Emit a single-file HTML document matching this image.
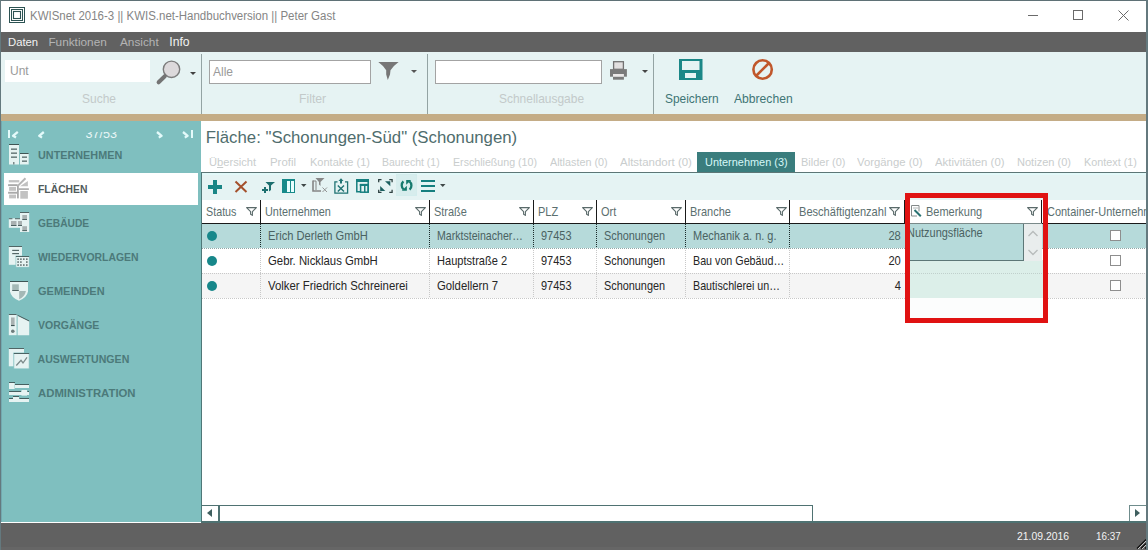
<!DOCTYPE html>
<html><head><meta charset="utf-8">
<style>
*{box-sizing:border-box;margin:0;padding:0}
html,body{width:1148px;height:550px;overflow:hidden;background:#fff;font-family:"Liberation Sans",sans-serif}
.a{position:absolute}
.t{position:absolute;white-space:nowrap;line-height:normal}
#win{position:absolute;left:0;top:0;width:1148px;height:550px;overflow:hidden;background:#fff}
</style></head><body>
<div id="win">
<!-- borders -->

<!-- title bar -->
<svg class="a" style="left:9px;top:7px" width="16" height="16" viewBox="0 0 16 16">
<rect x="0.5" y="0.5" width="15" height="15" fill="none" stroke="#2c5252" stroke-width="1"/>
<rect x="2.5" y="2.5" width="11" height="11" fill="none" stroke="#2c5252" stroke-width="1"/>
<rect x="4.5" y="4.5" width="7" height="7" fill="none" stroke="#2c5252" stroke-width="1.1"/>
</svg>
<div class="t" style="left:30.2px;top:8.69px;font-size:12.5px;color:#858585;transform:scaleX(0.918);transform-origin:0 0">KWISnet 2016-3 || KWIS.net-Handbuchversion || Peter Gast</div>
<div class="a" style="left:1028px;top:15px;width:10px;height:1px;background:#6a6a6a"></div>
<div class="a" style="left:1073px;top:10px;width:10px;height:10px;border:1px solid #6a6a6a"></div>
<svg class="a" style="left:1118px;top:10px" width="11" height="11" viewBox="0 0 11 11"><path d="M0.5 0.5L10.5 10.5M10.5 0.5L0.5 10.5" stroke="#6a6a6a" stroke-width="1"/></svg>

<!-- menu bar -->
<div class="a" style="left:1px;top:32px;width:1145px;height:20px;background:#616161"></div>
<div class="t" style="left:8px;top:36.2px;font-size:11.3px;color:#f2f2f2">Daten</div>
<div class="t" style="left:48.4px;top:35.4px;font-size:11.8px;color:#b4b4b4">Funktionen</div>
<div class="t" style="left:120px;top:35.4px;font-size:11.8px;color:#b4b4b4">Ansicht</div>
<div class="t" style="left:169.3px;top:35.2px;font-size:12.2px;color:#f2f2f2">Info</div>

<!-- ribbon -->
<div class="a" style="left:1px;top:52px;width:1145px;height:62px;background:#e6f3f3"></div>
<div class="a" style="left:201px;top:54px;width:1px;height:60px;background:#93a3a3"></div>
<div class="a" style="left:427px;top:54px;width:1px;height:60px;background:#93a3a3"></div>
<div class="a" style="left:653px;top:54px;width:1px;height:60px;background:#93a3a3"></div>
<!-- Suche -->
<div class="a" style="left:5px;top:60px;width:145px;height:22px;background:#fff"></div>
<div class="t" style="left:10px;top:63.5px;font-size:12px;color:#9a9a9a">Unt</div>
<svg class="a" style="left:155px;top:58px" width="30" height="28" viewBox="0 0 30 28">
<circle cx="16.5" cy="11.3" r="8.2" fill="#dcd9db" stroke="#7c7c7c" stroke-width="1.4"/>
<path d="M9.8 18.2L3.6 24.3" stroke="#747474" stroke-width="4" stroke-linecap="round"/>
</svg>
<div class="a" style="left:189.5px;top:72px;width:0;height:0;border-left:3px solid transparent;border-right:3px solid transparent;border-top:3px solid #404040"></div>
<div class="t" style="left:81.6px;top:91.42px;font-size:12.8px;color:#c3caca;transform:scaleX(0.937);transform-origin:0 0">Suche</div>
<!-- Filter -->
<div class="a" style="left:209px;top:60px;width:162px;height:24px;background:#fff;border:1px solid #a3a3a3"></div>
<div class="t" style="left:213px;top:64.5px;font-size:12px;color:#9a9a9a">Alle</div>
<svg class="a" style="left:377px;top:61px" width="23" height="20" viewBox="0 0 23 20"><path d="M1.3 0.9H21.6Q16 5 13.5 9.2L13 13.5L10.8 18.9L9.2 13.5V9.2Q7 5 1.3 0.9Z" fill="#767676"/></svg>
<div class="a" style="left:411px;top:70px;width:0;height:0;border-left:3px solid transparent;border-right:3px solid transparent;border-top:3px solid #555"></div>
<div class="t" style="left:299.3px;top:91.42px;font-size:12.8px;color:#c3caca;transform:scaleX(0.954);transform-origin:0 0">Filter</div>
<!-- Schnellausgabe -->
<div class="a" style="left:435px;top:60px;width:167px;height:24px;background:#fff;border:1px solid #a3a3a3"></div>
<svg class="a" style="left:609px;top:61px" width="19" height="20" viewBox="0 0 19 20">
<rect x="4.6" y="0.7" width="9.8" height="7.6" fill="#e2e0e0" stroke="#727272" stroke-width="1.3"/>
<rect x="1" y="8.1" width="16.9" height="7.6" fill="#7a7a7a"/>
<rect x="4" y="13" width="10.9" height="2.7" fill="#ebe8e8"/>
<rect x="4" y="16" width="10.9" height="2.7" fill="#7a7a7a"/>
</svg>
<div class="a" style="left:641.5px;top:70px;width:0;height:0;border-left:3px solid transparent;border-right:3px solid transparent;border-top:3px solid #454545"></div>
<div class="t" style="left:499px;top:91.42px;font-size:12.8px;color:#c3caca;transform:scaleX(0.934);transform-origin:0 0">Schnellausgabe</div>
<!-- Speichern -->
<svg class="a" style="left:679px;top:59px" width="24" height="21" viewBox="0 0 24 21">
<rect x="0" y="0" width="23.5" height="21" fill="#1b8787"/>
<rect x="3" y="2" width="17.5" height="9" fill="#e6f3f3"/>
<rect x="6" y="14" width="11" height="5" fill="#e6f3f3"/>
</svg>
<div class="t" style="left:664.8px;top:91.42px;font-size:12.8px;color:#3e7575;transform:scaleX(0.932);transform-origin:0 0">Speichern</div>
<svg class="a" style="left:751px;top:58px" width="24" height="24" viewBox="0 0 24 24">
<circle cx="11.6" cy="11.5" r="9.2" fill="none" stroke="#c0572b" stroke-width="2.6"/>
<path d="M17.5 5.5L5.5 17.5" stroke="#c0572b" stroke-width="2.6"/>
</svg>
<div class="t" style="left:733.8px;top:91.42px;font-size:12.8px;color:#3e7575;transform:scaleX(0.947);transform-origin:0 0">Abbrechen</div>

<!-- tan stripe -->
<div class="a" style="left:1px;top:114px;width:1145px;height:7px;background:#c4ac86"></div>

<!-- sidebar -->
<div class="a" style="left:1px;top:121px;width:200px;height:401px;background:#7fbfbf"></div>
<div class="a" style="left:1px;top:131.5px;width:200px;height:7px;overflow:hidden">
<div class="t" style="left:84.4px;top:-4.8px;font-size:12.6px;color:#e8f6f6">37/53</div>
</div>
<div class="a" style="left:4px;top:173px;width:194px;height:32px;background:#fff"></div>
<div class="t" style="left:37.5px;top:149.4px;font-size:10.6px;font-weight:bold;color:#4c7a7a;transform:scaleX(1.022);transform-origin:0 0">UNTERNEHMEN</div>
<div class="t" style="left:37.5px;top:183.4px;font-size:10.6px;font-weight:bold;color:#505a5a;transform:scaleX(0.978);transform-origin:0 0">FLÄCHEN</div>
<div class="t" style="left:37.5px;top:217.4px;font-size:10.6px;font-weight:bold;color:#4c7a7a;transform:scaleX(0.965);transform-origin:0 0">GEBÄUDE</div>
<div class="t" style="left:37.5px;top:251.4px;font-size:10.6px;font-weight:bold;color:#4c7a7a;transform:scaleX(0.984);transform-origin:0 0">WIEDERVORLAGEN</div>
<div class="t" style="left:37.5px;top:285.4px;font-size:10.6px;font-weight:bold;color:#4c7a7a;transform:scaleX(1.038);transform-origin:0 0">GEMEINDEN</div>
<div class="t" style="left:37.5px;top:319.4px;font-size:10.6px;font-weight:bold;color:#4c7a7a;transform:scaleX(0.992);transform-origin:0 0">VORGÄNGE</div>
<div class="t" style="left:37.5px;top:353.4px;font-size:10.6px;font-weight:bold;color:#4c7a7a;transform:scaleX(1.0);transform-origin:0 0">AUSWERTUNGEN</div>
<div class="t" style="left:37.5px;top:387.4px;font-size:10.6px;font-weight:bold;color:#4c7a7a;transform:scaleX(1.072);transform-origin:0 0">ADMINISTRATION</div>

<!--S:side-->
<svg class="a" style="left:0;top:0" width="210" height="420" viewBox="0 0 210 420">
<!-- nav arrows -->
<rect x="8" y="130" width="2" height="8" fill="#e4fafa"/>
<path d="M17.8 131.8L13 135.8L16 137.6" fill="none" stroke="#e4fafa" stroke-width="2.3" stroke-linejoin="round"/>
<path d="M43.8 132L39.2 135.8L42 137.6" fill="none" stroke="#e4fafa" stroke-width="2.3" stroke-linejoin="round"/>
<path d="M157 132L161.6 135.8L158.8 137.6" fill="none" stroke="#e4fafa" stroke-width="2.3" stroke-linejoin="round"/>
<path d="M183 132L187.6 135.8L184.8 137.6" fill="none" stroke="#e4fafa" stroke-width="2.3" stroke-linejoin="round"/>
<rect x="191" y="130" width="2" height="8" fill="#e4fafa"/>
<!-- UNTERNEHMEN -->
<g>
<rect x="9" y="144" width="10" height="20.5" fill="#e6f3f2"/>
<rect x="9" y="144" width="10" height="1" fill="#3f5555"/>
<rect x="11" y="148.5" width="6" height="1.3" fill="#556868"/>
<rect x="11" y="152.5" width="6" height="1.3" fill="#556868"/>
<rect x="11" y="156.5" width="6" height="1.3" fill="#556868"/>
<rect x="13" y="162" width="1.5" height="2.5" fill="#7a8a8a"/>
<rect x="20" y="153" width="8.7" height="11.5" fill="#e6f3f2"/>
<rect x="20" y="153" width="8.7" height="1" fill="#3f5555"/>
<rect x="22" y="156.5" width="5" height="1.3" fill="#556868"/>
<rect x="22" y="160.5" width="5" height="1.3" fill="#556868"/>
</g>
<!-- FLÄCHEN -->
<g>
<rect x="8.8" y="180.1" width="10.5" height="2.3" fill="#c2c2c2"/>
<rect x="8.1" y="184.2" width="9.6" height="1.9" fill="#a9a9a9"/>
<rect x="9.1" y="187" width="6.9" height="3.8" fill="#c2c2c2"/>
<rect x="8.1" y="191.8" width="9.6" height="1.9" fill="#a9a9a9"/>
<rect x="9.1" y="194.6" width="6.9" height="3.8" fill="#c2c2c2"/>
<rect x="17" y="185" width="1.8" height="13.4" fill="#a9a9a9"/>
<path d="M16.8 185.4L24.8 177.6L26.2 179L18.2 186.8Z" fill="#b5b5b5"/>
<path d="M20 186.2L27.9 180.9V186.2Z" fill="#c2c2c2"/>
<rect x="18.8" y="188.3" width="10.1" height="1.6" fill="#a9a9a9"/>
<rect x="20.3" y="191" width="7.6" height="7.7" fill="#c2c2c2"/>
</g>
<!-- GEBÄUDE -->
<g>
<rect x="20" y="212" width="9.2" height="20" fill="#e6f3f2"/>
<rect x="8.8" y="218.3" width="12" height="9.5" fill="#e6f3f2"/>
<rect x="20" y="212" width="9.2" height="0.9" fill="#3f5555"/>
<rect x="8.8" y="218.3" width="3.6" height="0.9" fill="#3f5555"/>
<rect x="15" y="218.3" width="5" height="0.9" fill="#3f5555"/>
<rect x="22.3" y="215" width="4.7" height="4.5" fill="#a9b2b2"/>
<rect x="22.3" y="219" width="4.7" height="0.9" fill="#3f5555"/>
<rect x="22.3" y="226.2" width="4.7" height="4.5" fill="#a9b2b2"/>
<rect x="22.3" y="230.2" width="4.7" height="0.9" fill="#3f5555"/>
<rect x="11" y="221" width="5.5" height="4.5" fill="#a9b2b2"/>
<rect x="18" y="221" width="4" height="4.5" fill="#a9b2b2"/>
<rect x="11" y="225" width="5.5" height="0.9" fill="#3f5555"/>
<rect x="18" y="225" width="4" height="0.9" fill="#3f5555"/>
</g>
<!-- WIEDERVORLAGEN -->
<g>
<rect x="8.8" y="246" width="13.2" height="18.8" fill="#e6f3f2"/>
<rect x="8.8" y="246" width="13.2" height="0.9" fill="#3f5555"/>
<rect x="12.2" y="249.8" width="6.8" height="1.2" fill="#556868"/>
<rect x="12.2" y="253" width="6.8" height="1.2" fill="#556868"/>
<rect x="15.9" y="256" width="13.3" height="11.2" fill="#e6f3f2" stroke="#7fbfbf" stroke-width="0.6"/>
<rect x="15.9" y="256" width="13.3" height="0.9" fill="#3f5555"/>
<g fill="#5a6a6a">
<rect x="17.3" y="258.4" width="1.6" height="1.5"/><rect x="20.1" y="258.4" width="1.6" height="1.5"/><rect x="23" y="258.4" width="1.6" height="1.5"/><rect x="26" y="258.4" width="1.6" height="1.5"/>
<rect x="17.3" y="261.3" width="1.6" height="1.5"/><rect x="20.1" y="261.3" width="1.6" height="1.5"/><rect x="26" y="261.3" width="1.6" height="1.5"/>
<rect x="17.3" y="264.3" width="1.6" height="1.5"/><rect x="20.1" y="264.3" width="1.6" height="1.5"/><rect x="23" y="264.3" width="1.6" height="1.5"/><rect x="26" y="264.3" width="1.6" height="1.5"/>
</g>
</g>
<!-- GEMEINDEN -->
<g>
<path d="M10 281H28V291.5Q27 297.5 19 300.8Q11 297.5 10 291.5Z" fill="#e6f3f2"/>
<rect x="10" y="281" width="18" height="1" fill="#3f5555"/>
<rect x="12.2" y="284.3" width="6.6" height="6" fill="#a4b8b6"/>
<rect x="12.2" y="290" width="6.6" height="0.9" fill="#3f5555"/>
<path d="M19.2 291H25.9Q25 296.5 19.2 299.3Z" fill="#a4b8b6"/>
</g>
<!-- VORGÄNGE -->
<g>
<rect x="8.8" y="314" width="7.8" height="21.2" fill="#e6f3f2"/>
<rect x="8.8" y="314" width="7.8" height="0.9" fill="#3f5555"/>
<rect x="11" y="317.5" width="3.6" height="8" fill="#a9b2b2"/>
<rect x="11" y="325" width="3.6" height="1.1" fill="#3f5555"/>
<circle cx="12.8" cy="331.3" r="1.8" fill="#6f7d7d"/>
<path d="M17.6 315.3L29.2 321V335.2H17.6Z" fill="#e6f3f2"/>
<path d="M17.6 315.3L29.2 321" stroke="#3f5555" stroke-width="1"/>
</g>
<!-- AUSWERTUNGEN -->
<g>
<rect x="8.8" y="348" width="15.2" height="18.3" fill="#e6f3f2"/>
<rect x="8.8" y="348" width="15.2" height="0.9" fill="#3f5555"/>
<rect x="13.8" y="353" width="15.4" height="15.9" fill="#e6f3f2" stroke="#7fbfbf" stroke-width="0.8"/>
<rect x="13.8" y="353" width="15.4" height="0.9" fill="#3f5555"/>
<path d="M16.3 365.5L21 360.3L23 363L27 357.3" fill="none" stroke="#7c8a8a" stroke-width="1.3"/>
</g>
<!-- ADMINISTRATION -->
<g>
<rect x="9" y="382" width="6" height="0.9" fill="#3f5555"/>
<rect x="9" y="383" width="5.6" height="6" fill="#e6f3f2"/>
<rect x="15" y="384" width="14" height="0.9" fill="#3f5555"/>
<rect x="15" y="385" width="14" height="3" fill="#e6f3f2"/>
<rect x="9" y="391" width="12" height="0.9" fill="#3f5555"/>
<rect x="9" y="392" width="20" height="3" fill="#e6f3f2"/>
<rect x="21.5" y="390" width="5.5" height="5.6" fill="#e6f3f2"/>
<rect x="27.5" y="391" width="1.5" height="0.9" fill="#3f5555"/>
<rect x="13" y="396" width="6" height="0.9" fill="#3f5555"/>
<rect x="9" y="398" width="4" height="0.9" fill="#3f5555"/>
<rect x="19.5" y="398" width="9.5" height="0.9" fill="#3f5555"/>
<rect x="9" y="399" width="20" height="3" fill="#e6f3f2"/>
<rect x="13" y="397" width="6" height="5" fill="#e6f3f2"/>
</g>
</svg>
<!--E:side-->
<!-- main -->
<div class="a" style="left:201px;top:121px;width:945px;height:401px;background:#fff"></div>
<div class="a" style="left:201px;top:172px;width:1px;height:350px;background:#4e7878"></div>
<div class="t" style="left:205.8px;top:127.5px;font-size:16.8px;color:#4f6d6d">Fläche: "Schonungen-Süd" (Schonungen)</div>
<!--S:tabs-->
<div class="a" style="left:697px;top:152px;width:98px;height:20px;background:#3a7d7d"></div>
<div class="t" style="left:209.0px;top:155.86px;font-size:11.2px;color:#c9cdcd;transform:scaleX(0.994);transform-origin:0 0;">Ü<u style='text-decoration-thickness:1px;text-underline-offset:1px'>b</u>ersicht</div>
<div class="t" style="left:270.0px;top:155.86px;font-size:11.2px;color:#c9cdcd;transform:scaleX(1.020);transform-origin:0 0;">Profil</div>
<div class="t" style="left:310.0px;top:155.86px;font-size:11.2px;color:#c9cdcd;transform:scaleX(0.984);transform-origin:0 0;">Kontakte (1)</div>
<div class="t" style="left:382.0px;top:155.86px;font-size:11.2px;color:#c9cdcd;transform:scaleX(0.936);transform-origin:0 0;">Baurecht (1)</div>
<div class="t" style="left:453.0px;top:155.86px;font-size:11.2px;color:#c9cdcd;transform:scaleX(0.951);transform-origin:0 0;">Erschließung (10)</div>
<div class="t" style="left:549.9px;top:155.86px;font-size:11.2px;color:#c9cdcd;transform:scaleX(0.966);transform-origin:0 0;">Altlasten (0)</div>
<div class="t" style="left:620.0px;top:155.86px;font-size:11.2px;color:#c9cdcd;transform:scaleX(1.023);transform-origin:0 0;">Altstandort (0)</div>
<div class="t" style="left:705.3px;top:155.86px;font-size:11.2px;color:#d6f8f8;transform:scaleX(0.978);transform-origin:0 0;">Unternehmen (3)</div>
<div class="t" style="left:801.0px;top:155.86px;font-size:11.2px;color:#c9cdcd;transform:scaleX(0.980);transform-origin:0 0;">Bilder (0)</div>
<div class="t" style="left:857.0px;top:155.86px;font-size:11.2px;color:#c9cdcd;transform:scaleX(1.013);transform-origin:0 0;">Vorgänge (0)</div>
<div class="t" style="left:935.0px;top:155.86px;font-size:11.2px;color:#c9cdcd;transform:scaleX(1.016);transform-origin:0 0;">Aktivitäten (0)</div>
<div class="t" style="left:1017.0px;top:155.86px;font-size:11.2px;color:#c9cdcd;transform:scaleX(0.987);transform-origin:0 0;">Notizen (0)</div>
<div class="t" style="left:1083.7px;top:155.86px;font-size:11.2px;color:#c9cdcd;transform:scaleX(0.968);transform-origin:0 0;">Kontext (1)</div>
<div class="a" style="left:202px;top:172px;width:944px;height:1px;background:#5d7676"></div>
<!--E:tabs-->
<div id="toolbar"></div>
<!--S:grid-->
<div class="a" style="left:202px;top:173px;width:944px;height:27px;background:#e5f3f3"></div>
<div class="a" style="left:202px;top:173px;width:944px;height:2px;background:#e2f9f9"></div>
<div class="a" style="left:396px;top:174px;width:21px;height:22px;background:#d3eded"></div>
<div class="a" style="left:202px;top:200px;width:944px;height:23px;background:#fff"></div>
<div class="a" style="left:202px;top:223px;width:944px;height:1px;background:#1a1a1a"></div>
<div class="a" style="left:260px;top:200px;width:1px;height:23px;background:#1a1a1a"></div>
<div class="a" style="left:429px;top:200px;width:1px;height:23px;background:#1a1a1a"></div>
<div class="a" style="left:533px;top:200px;width:1px;height:23px;background:#1a1a1a"></div>
<div class="a" style="left:596px;top:200px;width:1px;height:23px;background:#1a1a1a"></div>
<div class="a" style="left:685px;top:200px;width:1px;height:23px;background:#1a1a1a"></div>
<div class="a" style="left:789px;top:200px;width:1px;height:23px;background:#1a1a1a"></div>
<div class="a" style="left:904px;top:200px;width:1px;height:23px;background:#1a1a1a"></div>
<div class="a" style="left:1041px;top:200px;width:1px;height:23px;background:#1a1a1a"></div>
<div class="t" style="left:206.1px;top:204.76px;font-size:12.2px;color:#5b6f6f;transform:scaleX(0.882);transform-origin:0 0;">Status</div>
<div class="t" style="left:265.2px;top:204.76px;font-size:12.2px;color:#5b6f6f;transform:scaleX(0.892);transform-origin:0 0;">Unternehmen</div>
<div class="t" style="left:434.0px;top:204.76px;font-size:12.2px;color:#5b6f6f;transform:scaleX(0.900);transform-origin:0 0;">Straße</div>
<div class="t" style="left:537.9px;top:204.76px;font-size:12.2px;color:#5b6f6f;transform:scaleX(0.900);transform-origin:0 0;">PLZ</div>
<div class="t" style="left:600.5px;top:204.76px;font-size:12.2px;color:#5b6f6f;transform:scaleX(0.900);transform-origin:0 0;">Ort</div>
<div class="t" style="left:690.1px;top:204.76px;font-size:12.2px;color:#5b6f6f;transform:scaleX(0.900);transform-origin:0 0;">Branche</div>
<div class="t" style="left:799.1px;top:204.76px;font-size:12.2px;color:#5b6f6f;transform:scaleX(0.908);transform-origin:0 0;">Beschäftigtenzahl</div>
<div class="t" style="left:926.2px;top:204.76px;font-size:12.2px;color:#5b6f6f;transform:scaleX(0.900);transform-origin:0 0;">Bemerkung</div>
<div class="t" style="left:1047.0px;top:204.76px;font-size:12.2px;color:#5b6f6f;transform:scaleX(0.900);transform-origin:0 0;">Container-Unternehmen</div>
<svg class="a" style="left:246.2px;top:206.5px" width="11" height="9" viewBox="0 0 11 9"><path d="M0.6 0.6H10.4L6.4 4.6V8.4L4.6 7.2V4.6Z" fill="none" stroke="#5a6a6a" stroke-width="1.1" stroke-linejoin="round"/></svg>
<svg class="a" style="left:415.3px;top:206.5px" width="11" height="9" viewBox="0 0 11 9"><path d="M0.6 0.6H10.4L6.4 4.6V8.4L4.6 7.2V4.6Z" fill="none" stroke="#5a6a6a" stroke-width="1.1" stroke-linejoin="round"/></svg>
<svg class="a" style="left:519.0px;top:206.5px" width="11" height="9" viewBox="0 0 11 9"><path d="M0.6 0.6H10.4L6.4 4.6V8.4L4.6 7.2V4.6Z" fill="none" stroke="#5a6a6a" stroke-width="1.1" stroke-linejoin="round"/></svg>
<svg class="a" style="left:582.0px;top:206.5px" width="11" height="9" viewBox="0 0 11 9"><path d="M0.6 0.6H10.4L6.4 4.6V8.4L4.6 7.2V4.6Z" fill="none" stroke="#5a6a6a" stroke-width="1.1" stroke-linejoin="round"/></svg>
<svg class="a" style="left:671.4px;top:206.5px" width="11" height="9" viewBox="0 0 11 9"><path d="M0.6 0.6H10.4L6.4 4.6V8.4L4.6 7.2V4.6Z" fill="none" stroke="#5a6a6a" stroke-width="1.1" stroke-linejoin="round"/></svg>
<svg class="a" style="left:776.0px;top:206.5px" width="11" height="9" viewBox="0 0 11 9"><path d="M0.6 0.6H10.4L6.4 4.6V8.4L4.6 7.2V4.6Z" fill="none" stroke="#5a6a6a" stroke-width="1.1" stroke-linejoin="round"/></svg>
<svg class="a" style="left:888.5px;top:206.5px" width="11" height="9" viewBox="0 0 11 9"><path d="M0.6 0.6H10.4L6.4 4.6V8.4L4.6 7.2V4.6Z" fill="none" stroke="#5a6a6a" stroke-width="1.1" stroke-linejoin="round"/></svg>
<svg class="a" style="left:1027.0px;top:206.5px" width="11" height="9" viewBox="0 0 11 9"><path d="M0.6 0.6H10.4L6.4 4.6V8.4L4.6 7.2V4.6Z" fill="none" stroke="#5a6a6a" stroke-width="1.1" stroke-linejoin="round"/></svg>
<div class="a" style="left:202px;top:224px;width:944px;height:24px;background:#b6dada"></div>
<div class="a" style="left:202px;top:248px;width:944px;height:25px;background:#ffffff"></div>
<div class="a" style="left:202px;top:273px;width:944px;height:25px;background:#f5f5f5"></div>
<div class="a" style="left:202px;top:248px;width:944px;height:1px;background-image:linear-gradient(90deg,#8fa8a8 50%,transparent 50%);background-size:2px 1px"></div>
<div class="a" style="left:202px;top:273px;width:944px;height:1px;background-image:linear-gradient(90deg,#c8c8c8 50%,transparent 50%);background-size:2px 1px"></div>
<div class="a" style="left:202px;top:298px;width:944px;height:1px;background-image:linear-gradient(90deg,#c8c8c8 50%,transparent 50%);background-size:2px 1px"></div>
<div class="a" style="left:260px;top:224px;width:1px;height:24px;background-image:linear-gradient(180deg,#1a2a2a 50%,transparent 50%);background-size:1px 2px"></div>
<div class="a" style="left:260px;top:248px;width:1px;height:50px;background-image:linear-gradient(180deg,#c8c8c8 50%,transparent 50%);background-size:1px 2px"></div>
<div class="a" style="left:429px;top:224px;width:1px;height:24px;background-image:linear-gradient(180deg,#1a2a2a 50%,transparent 50%);background-size:1px 2px"></div>
<div class="a" style="left:429px;top:248px;width:1px;height:50px;background-image:linear-gradient(180deg,#c8c8c8 50%,transparent 50%);background-size:1px 2px"></div>
<div class="a" style="left:533px;top:224px;width:1px;height:24px;background-image:linear-gradient(180deg,#1a2a2a 50%,transparent 50%);background-size:1px 2px"></div>
<div class="a" style="left:533px;top:248px;width:1px;height:50px;background-image:linear-gradient(180deg,#c8c8c8 50%,transparent 50%);background-size:1px 2px"></div>
<div class="a" style="left:596px;top:224px;width:1px;height:24px;background-image:linear-gradient(180deg,#1a2a2a 50%,transparent 50%);background-size:1px 2px"></div>
<div class="a" style="left:596px;top:248px;width:1px;height:50px;background-image:linear-gradient(180deg,#c8c8c8 50%,transparent 50%);background-size:1px 2px"></div>
<div class="a" style="left:685px;top:224px;width:1px;height:24px;background-image:linear-gradient(180deg,#1a2a2a 50%,transparent 50%);background-size:1px 2px"></div>
<div class="a" style="left:685px;top:248px;width:1px;height:50px;background-image:linear-gradient(180deg,#c8c8c8 50%,transparent 50%);background-size:1px 2px"></div>
<div class="a" style="left:789px;top:224px;width:1px;height:24px;background-image:linear-gradient(180deg,#1a2a2a 50%,transparent 50%);background-size:1px 2px"></div>
<div class="a" style="left:789px;top:248px;width:1px;height:50px;background-image:linear-gradient(180deg,#c8c8c8 50%,transparent 50%);background-size:1px 2px"></div>
<div class="a" style="left:207px;top:231px;width:10px;height:10px;border-radius:50%;background:#17878a"></div>
<div class="a" style="left:207px;top:256px;width:10px;height:10px;border-radius:50%;background:#17878a"></div>
<div class="a" style="left:207px;top:281px;width:10px;height:10px;border-radius:50%;background:#17878a"></div>
<div class="t" style="left:268.1px;top:228.78px;font-size:12.4px;color:#4a6262;transform:scaleX(0.900);transform-origin:0 0;">Erich Derleth GmbH</div>
<div class="t" style="left:437.4px;top:228.78px;font-size:12.4px;color:#4a6262;transform:scaleX(0.855);transform-origin:0 0;">Marktsteinacher…</div>
<div class="t" style="left:540.9px;top:228.78px;font-size:12.4px;color:#4a6262;transform:scaleX(0.885);transform-origin:0 0;">97453</div>
<div class="t" style="left:603.9px;top:228.78px;font-size:12.4px;color:#4a6262;transform:scaleX(0.877);transform-origin:0 0;">Schonungen</div>
<div class="t" style="left:693.0px;top:228.78px;font-size:12.4px;color:#4a6262;transform:scaleX(0.885);transform-origin:0 0;">Mechanik a. n. g.</div>
<div class="t" style="right:247.5px;top:228.78px;font-size:12.4px;color:#4a6262;transform:scaleX(0.9);transform-origin:100% 0">28</div>
<div class="t" style="left:268.1px;top:253.78px;font-size:12.4px;color:#262626;transform:scaleX(0.916);transform-origin:0 0;">Gebr. Nicklaus GmbH</div>
<div class="t" style="left:437.4px;top:253.78px;font-size:12.4px;color:#262626;transform:scaleX(0.893);transform-origin:0 0;">Hauptstraße 2</div>
<div class="t" style="left:540.9px;top:253.78px;font-size:12.4px;color:#262626;transform:scaleX(0.885);transform-origin:0 0;">97453</div>
<div class="t" style="left:603.9px;top:253.78px;font-size:12.4px;color:#262626;transform:scaleX(0.877);transform-origin:0 0;">Schonungen</div>
<div class="t" style="left:693.0px;top:253.78px;font-size:12.4px;color:#262626;transform:scaleX(0.865);transform-origin:0 0;">Bau von Gebäud…</div>
<div class="t" style="right:247.5px;top:253.78px;font-size:12.4px;color:#262626;transform:scaleX(0.9);transform-origin:100% 0">20</div>
<div class="t" style="left:268.1px;top:278.78px;font-size:12.4px;color:#262626;transform:scaleX(0.919);transform-origin:0 0;">Volker Friedrich Schreinerei</div>
<div class="t" style="left:437.4px;top:278.78px;font-size:12.4px;color:#262626;transform:scaleX(0.914);transform-origin:0 0;">Goldellern 7</div>
<div class="t" style="left:540.9px;top:278.78px;font-size:12.4px;color:#262626;transform:scaleX(0.885);transform-origin:0 0;">97453</div>
<div class="t" style="left:603.9px;top:278.78px;font-size:12.4px;color:#262626;transform:scaleX(0.877);transform-origin:0 0;">Schonungen</div>
<div class="t" style="left:693.0px;top:278.78px;font-size:12.4px;color:#262626;transform:scaleX(0.865);transform-origin:0 0;">Bautischlerei un…</div>
<div class="t" style="right:247.5px;top:278.78px;font-size:12.4px;color:#262626;transform:scaleX(0.9);transform-origin:100% 0">4</div>
<div class="a" style="left:1110px;top:230px;width:11px;height:11px;border:1px solid #8e8e8e;background:#fff"></div>
<div class="a" style="left:1110px;top:255px;width:11px;height:11px;border:1px solid #8e8e8e;background:#fff"></div>
<div class="a" style="left:1110px;top:280px;width:11px;height:11px;border:1px solid #8e8e8e;background:#fff"></div>
<div class="a" style="left:905px;top:260px;width:138px;height:38px;background:#dcefe9"></div>
<div class="a" style="left:905px;top:273px;width:138px;height:1px;background-image:linear-gradient(90deg,#c0d0cc 50%,transparent 50%);background-size:2px 1px"></div>
<div class="a" style="left:905px;top:298px;width:138px;height:21px;background:#fcfdfd"></div>
<div class="a" style="left:908px;top:223px;width:116px;height:38px;background:#b6dada;border:1px solid #5d7777;border-left:none"></div>
<div class="a" style="left:1024px;top:224px;width:18px;height:37px;background:#e9eded"></div>
<svg class="a" style="left:1027px;top:229px" width="12" height="28" viewBox="0 0 12 28"><path d="M1.5 7L6 2.5L10.5 7M1.5 21L6 25.5L10.5 21" fill="none" stroke="#b8bcbc" stroke-width="1.4"/></svg>
<div class="t" style="left:906.5px;top:225.76px;font-size:12.2px;color:#4a6262;transform:scaleX(0.900);transform-origin:0 0;">Nutzungsfläche</div>
<div class="a" style="left:905px;top:223px;width:137px;height:1px;background:#7a8a8a"></div>
<svg class="a" style="left:911px;top:205px" width="11" height="12" viewBox="0 0 11 12"><path d="M8 6.5V0.5H0.5V11H6" fill="none" stroke="#858a8a" stroke-width="1"/><path d="M2 3H7" stroke="#b0b4b4" stroke-width="1"/><path d="M3.5 5L9.8 11.2" stroke="#2a7272" stroke-width="2"/></svg>
<div class="a" style="left:905px;top:193px;width:143px;height:130px;border:5px solid #e01212"></div>
<!--E:grid-->
<!--S:icons-->
<svg class="a" style="left:0;top:0" width="1148" height="550" viewBox="0 0 1148 550">
<!-- plus -->
<rect x="208" y="185" width="14" height="4" fill="#198585"/>
<rect x="213" y="180" width="4" height="14" fill="#198585"/>
<!-- x -->
<path d="M235.5 181.5L246.5 192M246.5 181.5L235.5 192" stroke="#a4502c" stroke-width="2"/>
<!-- add filter -->
<path d="M265.5 182H275L271 185.5V190L269 191.5V185.5Z" fill="#1d6f6f"/>
<path d="M262 190H268M265 187V193" stroke="#1d6f6f" stroke-width="2"/>
<!-- columns -->
<rect x="282" y="179" width="13" height="14" fill="#178a8a"/>
<rect x="287" y="181" width="3" height="11" fill="#e8ffff"/>
<rect x="291" y="181" width="3" height="11" fill="#e8ffff"/>
<path d="M301 184H306.5L303.75 187Z" fill="#404848"/>
<!-- filter clear -->
<path d="M313 180.5V191H321" fill="none" stroke="#858585" stroke-width="1.6"/>
<path d="M313 181H316V190" fill="none" stroke="#858585" stroke-width="1"/>
<path d="M315.5 178H324.5L320.5 182V186L319 184.5V182Z" fill="#878787"/>
<path d="M322.5 187.5L327 192M327 187.5L322.5 192" stroke="#8a8a8a" stroke-width="0.9"/>
<!-- export -->
<path d="M337.5 181.8H334.9V193.1H347.6V181.8H345" fill="none" stroke="#1f7373" stroke-width="1.3"/>
<path d="M341 183.5V180.5" stroke="#1f7373" stroke-width="2"/>
<path d="M338.5 181L341 178.3L343.5 181Z" fill="#1f7373"/>
<path d="M337.8 185.5L344 191.5M344 185.5L337.8 191.5" stroke="#1f7373" stroke-width="1.4"/>
<!-- layout -->
<path d="M356.8 179.5V191.8H360.5M368.2 179.5V192.5" fill="none" stroke="#167f7f" stroke-width="1.5"/>
<rect x="356" y="179" width="13" height="3" fill="#167f7f"/>
<rect x="360.6" y="184.6" width="7.6" height="7.6" fill="none" stroke="#167f7f" stroke-width="1.5"/>
<rect x="359.8" y="184" width="9" height="2" fill="#167f7f"/>
<rect x="364" y="185" width="1.5" height="7.5" fill="#167f7f"/>
<!-- expand -->
<path d="M378.7 182.2V179.7H381.5M389.3 179.7H392.1V182.2M392.1 189.8V192.3H389.3M381.5 192.3H378.7V189.8" fill="none" stroke="#2f4242" stroke-width="1.3"/>
<path d="M385 181.3H390.3V186.3Z" fill="#1b5f5f"/>
<path d="M380.2 186V191H385.3Z" fill="#1b5f5f"/>
<!-- refresh hover -->
<rect x="396" y="175" width="20.5" height="20" rx="2" fill="#d8eded" opacity="0.7"/>
<path d="M403.4 181.4A4.2 4.9 0 0 0 403.6 189.4" fill="none" stroke="#167a6e" stroke-width="2.3"/>
<path d="M406.9 185.8V190.8H401.8Z" fill="#167a6e"/>
<path d="M409.4 181.4A4.2 4.9 0 0 1 409.6 189.6" fill="none" stroke="#167a6e" stroke-width="2.3"/>
<path d="M406.2 179.9H411.2L406.2 184.8Z" fill="#167a6e"/>
<!-- menu -->
<rect x="421" y="180" width="14" height="2" fill="#167f7f"/>
<rect x="421" y="185" width="14" height="2" fill="#167f7f"/>
<rect x="421" y="190" width="14" height="2" fill="#167f7f"/>
<path d="M440 184H445.5L442.75 187Z" fill="#404848"/>
</svg>
<!--E:icons-->

<!-- scrollbar -->
<!--S:hscroll-->
<div class="a" style="left:202px;top:505px;width:16px;height:17px;background:#fff;border-top:1px solid #4f7272"></div>
<div class="a" style="left:207px;top:509px;width:0;height:0;border-top:4px solid transparent;border-bottom:4px solid transparent;border-right:5px solid #3f5f5f"></div>
<div class="a" style="left:218px;top:505px;width:595px;height:17px;background:#fff;border:1px solid #4f7272;border-left:2px solid #4f7272;border-bottom:none"></div>
<div class="a" style="left:1129px;top:505px;width:17px;height:17px;background:#fff;border:1px solid #6f8c8c;border-bottom:none;border-right:none"></div>
<div class="a" style="left:1135px;top:509px;width:0;height:0;border-top:4px solid transparent;border-bottom:4px solid transparent;border-left:5px solid #3f5f5f"></div>
<div class="a" style="left:201px;top:521px;width:945px;height:2px;background:#4f7272"></div>
<!--E:hscroll-->

<!-- status bar -->
<div class="a" style="left:1px;top:522.5px;width:1145px;height:28px;background:#616161"></div>
<div class="a" style="left:1px;top:547px;width:1147px;height:3px;background:#666"></div>
<div class="t" style="left:1017.4px;top:531.3px;font-size:10.2px;color:#f4f4f4;transform:scaleX(1.02);transform-origin:0 0">21.09.2016</div>
<div class="t" style="left:1096px;top:531.3px;font-size:10.2px;color:#f4f4f4;transform:scaleX(0.965);transform-origin:0 0">16:37</div>
<!--S:final-->
<svg class="a" style="left:1134px;top:536px" width="14" height="14" viewBox="0 0 14 14"><path d="M12.5 4.5L4 13M12.5 8.5L8 13" stroke="#d8d8d8" stroke-width="1"/><path d="M12 3.5L3 12.5M12 7.5L7 12.5M12 11.5L11 12.5" stroke="#111" stroke-width="1.3"/></svg>
<div class="a" style="left:0;top:0;width:1148px;height:1px;background:#5f7176"></div>
<div class="a" style="left:0;top:0;width:1px;height:550px;background:#64797e"></div>
<div class="a" style="left:1px;top:121px;width:1px;height:401px;background:#72a9b0"></div>
<div class="a" style="left:1146px;top:0;width:2px;height:550px;background:#64797e"></div>
<!--E:final-->
</div>
</body></html>
